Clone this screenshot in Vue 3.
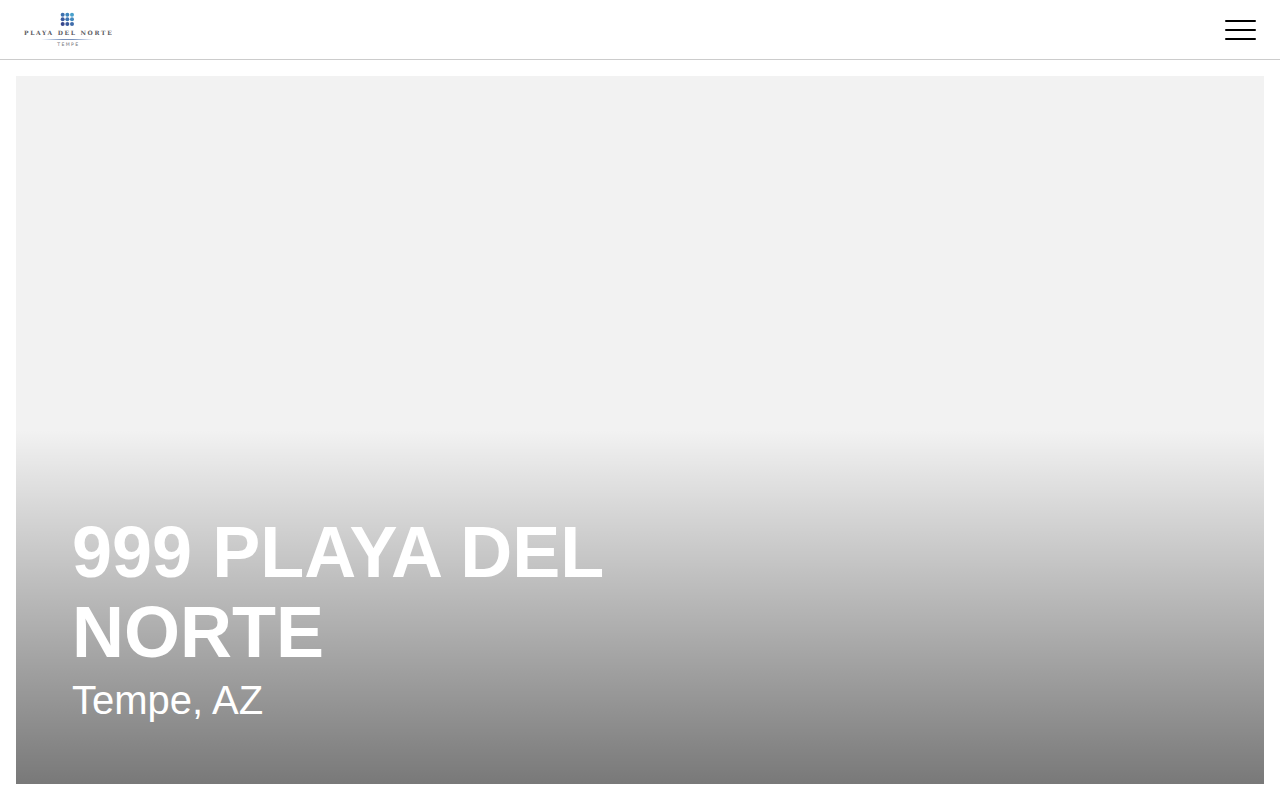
<script setup>
const dots = [
  '#3c6fae', '#3f86bd', '#48a0cc',
  '#3a5a9e', '#3f75b2', '#4389bf',
  '#38468c', '#3b5a9d', '#3f6cab',
].map((fill, i) => ({ fill, x: 116 + (i % 3) * 14, y: 20 + Math.floor(i / 3) * 14 }))
</script>

<template>
  <div class="page">
    <header class="bar">
      <a class="brand" href="#" aria-label="Playa del Norte Tempe">
        <svg class="logo" viewBox="0 0 264 132" aria-hidden="true">
          <defs>
            <linearGradient id="rule" x1="0" x2="1" y1="0" y2="0">
              <stop offset="0" stop-color="#6b8fc4" stop-opacity="0" />
              <stop offset="0.4" stop-color="#7891ba" />
              <stop offset="0.6" stop-color="#7891ba" />
              <stop offset="1" stop-color="#6b8fc4" stop-opacity="0" />
            </linearGradient>
          </defs>
          <circle v-for="(d, i) in dots" :key="i" :cx="d.x" :cy="d.y" r="6" :fill="d.fill" />
          <text class="name" x="134" y="81" text-anchor="middle">PLAYA DEL NORTE</text>
          <rect x="52" y="93" width="158" height="3" fill="url(#rule)" />
          <text class="city" x="133" y="115" text-anchor="middle">TEMPE</text>
        </svg>
      </a>
      <button class="menu" type="button" aria-label="Open menu">
        <span></span><span></span><span></span>
      </button>
    </header>
    <main class="main">
      <section class="hero">
        <div class="copy">
          <h1>999 PLAYA DEL NORTE</h1>
          <p>Tempe, AZ</p>
        </div>
      </section>
    </main>
  </div>
</template>

<style>
body {
  background: #fff;
}
</style>

<style scoped>
.page {
  display: flex;
  flex-direction: column;
  min-height: 100vh;
  font-family: "Liberation Sans", Arial, sans-serif;
}
.bar {
  display: flex;
  align-items: center;
  justify-content: space-between;
  box-sizing: border-box;
  height: 60px;
  padding: 0 24px;
  border-bottom: 1px solid #ccc;
}
.brand,
.logo {
  display: block;
}
.logo {
  width: 88px;
  height: 44px;
}
.name {
  font: bold 18px "DejaVu Serif", serif;
  letter-spacing: 5px;
  fill: #5c5c62;
}
.city {
  font: 14px "DejaVu Sans", sans-serif;
  letter-spacing: 4px;
  fill: #77777c;
}
.menu {
  display: flex;
  flex-direction: column;
  gap: 7px;
  width: 31px;
  padding: 0;
  border: 0;
  background: none;
  cursor: pointer;
}
.menu span {
  height: 2px;
  border-radius: 1px;
  background: #000;
}
.main {
  display: flex;
  flex: 1;
  padding: 16px;
}
.hero {
  display: flex;
  flex: 1;
  align-items: flex-end;
  padding: 56px;
  background: linear-gradient(rgba(0, 0, 0, 0) 50%, rgba(0, 0, 0, 0.5)) #f2f2f2;
  color: #fff;
}
.copy {
  width: 50%;
}
h1 {
  margin: 0;
  font-size: 72px;
  line-height: 80px;
  font-weight: bold;
}
p {
  margin: 0;
  font-size: 40px;
  line-height: 56px;
}
</style>
